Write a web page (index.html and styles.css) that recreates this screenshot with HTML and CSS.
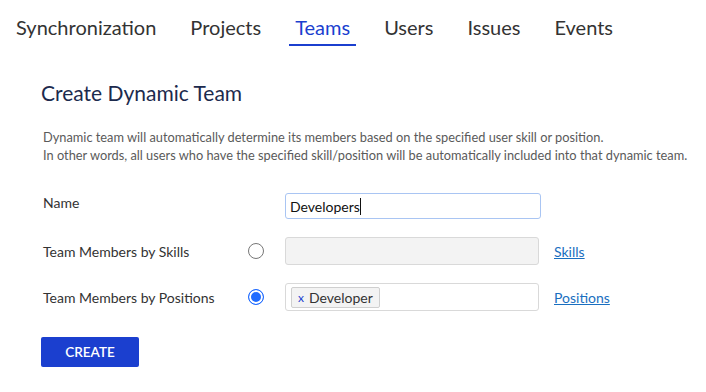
FILE: index.html
```html
<!DOCTYPE html>
<html>
<head>
  <meta charset="utf-8">
  <title>Teams</title>
  <link rel="stylesheet" href="styles.css">
</head>
<body>
  <nav class="tabs">
    <a class="tab">Synchronization</a>
    <a class="tab">Projects</a>
    <a class="tab active">Teams</a>
    <a class="tab">Users</a>
    <a class="tab">Issues</a>
    <a class="tab">Events</a>
  </nav>

  <div class="panel">
    <h1 class="title">Create Dynamic Team</h1>
    <p class="description">
      Dynamic team will automatically determine its members based on the specified user skill or position.<br>
      In other words, all users who have the specified skill/position will be automatically included into that dynamic team.
    </p>

    <div class="form">
      <div class="label label-top">Name</div>
      <div></div>
      <div class="field focused"><span class="value">Developers</span><span class="caret"></span></div>
      <div></div>

      <div class="label">Team Members by Skills</div>
      <span class="radio"></span>
      <div class="field disabled"></div>
      <a class="link">Skills</a>

      <div class="label">Team Members by Positions</div>
      <span class="radio checked"></span>
      <div class="field tags">
        <span class="chip"><span class="chip-x">x</span>Developer</span>
      </div>
      <a class="link">Positions</a>
    </div>

    <button class="button">CREATE</button>
  </div>
</body>
</html>
```

FILE: styles.css
```css
:root {
  --primary: #1b3fcf;
  --link: #1a6fc0;
  --text: #333333;
  --text-muted: #5a5a5a;
  --heading: #1c2a4d;
  --border: #d9d9d9;
  --bg-disabled: #f3f3f3;
}

* {
  margin: 0;
  padding: 0;
  box-sizing: border-box;
}

body {
  width: 706px;
  height: 392px;
  overflow: hidden;
  font-family: Lato, "Open Sans", sans-serif;
  color: var(--text);
  background: #ffffff;
}

.tabs {
  display: flex;
  gap: 22px;
  padding: 14px 0 0 10px;
  height: 46px;
}

.tab {
  padding: 0 6px;
  font-size: 20px;
  line-height: 27px;
  height: 32px;
  color: #333333;
  border-bottom: 2px solid transparent;
}

.tab.active {
  color: #1b3fcf;
  border-bottom-color: #1b3fcf;
}

.panel {
  padding: 33px 0 0 41px;
}

.title {
  font-size: 21px;
  font-weight: 400;
  color: var(--heading);
  line-height: 28px;
}

.description {
  margin-top: 21px;
  padding-left: 2px;
  font-size: 12.8px;
  line-height: 18px;
  color: var(--text-muted);
}

/* label | radio | input | link */
.form {
  display: grid;
  grid-template-columns: 205px 37px 269px auto;
  row-gap: 18px;
  align-items: center;
  margin-top: 29px;
  padding-left: 2px;
}

.label {
  font-size: 14px;
  color: #333333;
}

.label-top {
  align-self: start;
  padding-top: 1px;
}

.field {
  width: 256px;
  height: 28px;
  border: 1px solid var(--border);
  border-radius: 3px;
  font-size: 14px;
  display: flex;
  align-items: center;
  padding: 0 4px;
  color: #111111;
}

.field.focused {
  height: 26px;
  border-color: #a9c5f3;
}

.caret {
  width: 1px;
  height: 17px;
  background: #111111;
}

.field.disabled {
  width: 254px;
  background: var(--bg-disabled);
}

.field.tags {
  width: 254px;
  padding: 0 5px;
}

.chip {
  display: inline-flex;
  align-items: center;
  height: 21px;
  padding: 0 6px;
  background: var(--bg-disabled);
  border: 1px solid #cfcfcf;
  border-radius: 2px;
  font-size: 14px;
  color: #333333;
}

.chip-x {
  color: var(--primary);
  font-size: 12px;
  margin-right: 5px;
}

.radio {
  width: 16px;
  height: 16px;
  border: 1px solid #777777;
  border-radius: 50%;
  background: #ffffff;
}

.radio.checked {
  border: 1.5px solid #1f6bff;
  box-shadow: inset 0 0 0 2px #ffffff;
  background: #1f6bff;
}

.link {
  font-size: 14px;
  color: var(--link);
  text-decoration: underline;
}

.button {
  margin-top: 26px;
  width: 98px;
  height: 30px;
  border: none;
  border-radius: 2px;
  background: var(--primary);
  color: #ffffff;
  font-family: Lato, sans-serif;
  font-size: 13.5px;
  font-weight: 600;
}
```
